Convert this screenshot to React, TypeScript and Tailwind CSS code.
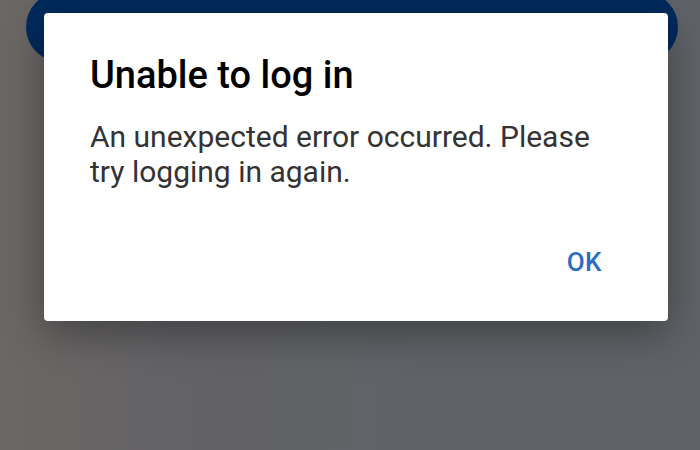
export default function App() {
  return (
    <div
      className="relative h-[450px] w-[700px] overflow-hidden bg-[linear-gradient(to_right,#6b6764_0%,#636266_25%,#5f6367_60%,#5f6367_100%)]"
      style={{ fontFamily: "Roboto, 'Noto Sans', sans-serif" }}
    >
      {/* underlying page: primary button behind the scrim */}
      <div className="ml-[26px] mt-[-8px] h-[70px] w-[652px] rounded-full bg-[#012a5d]" />

      {/* alert dialog */}
      <div className="absolute left-[44px] top-[13px] flex h-[308px] w-[624px] flex-col rounded-[4px] bg-white px-[46px] pt-[40px] shadow-[0_12px_40px_rgba(0,0,0,0.35)]">
        <h1 className="text-[38px] font-medium leading-[44px] text-black">Unable to log in</h1>
        <p className="mt-[22px] text-[30px] leading-[35px] text-[#333333]">
          An unexpected error occurred. Please try logging in again.
        </p>
        <div className="mt-auto flex justify-end pb-[44px]">
          <button className="mr-[20px] text-[26px] font-medium leading-[30px] tracking-[0.5px] text-[#2b6cc4]">OK</button>
        </div>
      </div>
    </div>
  );
}
